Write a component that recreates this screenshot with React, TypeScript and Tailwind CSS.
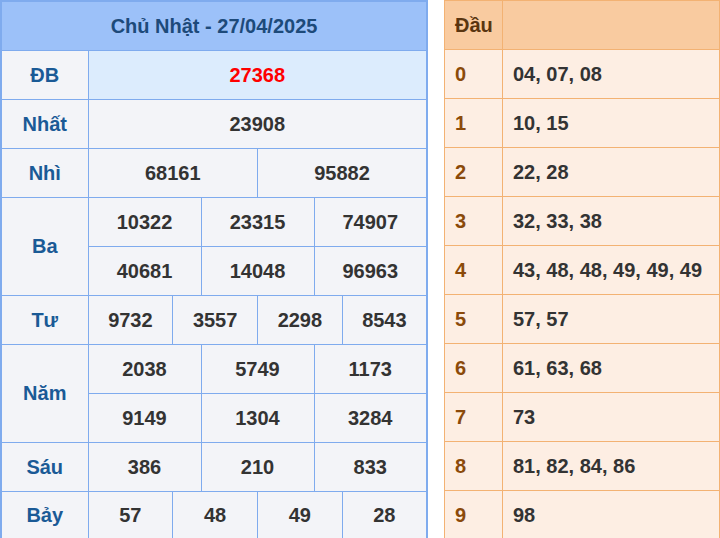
const rows: { label: string; values: string[][]; special?: boolean }[] = [
  { label: 'ĐB', values: [['27368']], special: true },
  { label: 'Nhất', values: [['23908']] },
  { label: 'Nhì', values: [['68161', '95882']] },
  { label: 'Ba', values: [['10322', '23315', '74907'], ['40681', '14048', '96963']] },
  { label: 'Tư', values: [['9732', '3557', '2298', '8543']] },
  { label: 'Năm', values: [['2038', '5749', '1173'], ['9149', '1304', '3284']] },
  { label: 'Sáu', values: [['386', '210', '833']] },
  { label: 'Bảy', values: [['57', '48', '49', '28']] },
];

const heads = [
  '04, 07, 08', '10, 15', '22, 28', '32, 33, 38', '43, 48, 48, 49, 49, 49',
  '57, 57', '61, 63, 68', '73', '81, 82, 84, 86', '98',
];

const font = { fontFamily: '"Liberation Sans", Arial, sans-serif' };

export default function App() {
  return (
    <div className="flex gap-[16px] w-[720px] h-[538px] overflow-hidden bg-white" style={font}>
      <table className="w-[428px] shrink-0 table-fixed border-collapse border-2 border-[#7fabee] text-[20px] font-bold">
        <colgroup>
          <col className="w-[87px]" />
          {Array.from({ length: 12 }).map((_, i) => <col key={i} />)}
        </colgroup>
        <tbody>
          <tr className="h-[49px] bg-[#9cc1f9]">
            <td colSpan={13} className="text-center text-[#1d4a7a] border border-[#7fabee]">Chủ Nhật - 27/04/2025</td>
          </tr>
          {rows.map((r) =>
            r.values.map((line, li) => (
              <tr key={r.label + li} className={`h-[49px] ${r.special ? 'bg-[#dcecfd]' : 'bg-[#f3f4f8]'}`}>
                {li === 0 && (
                  <td rowSpan={r.values.length} className="text-center text-[#1a5a96] border border-[#7fabee] bg-[#f3f4f8]">{r.label}</td>
                )}
                {line.map((v, i) => (
                  <td key={i} colSpan={12 / line.length} className={`text-center border border-[#7fabee] ${r.special ? 'text-[#ff0000]' : 'text-[#333333]'}`}>{v}</td>
                ))}
              </tr>
            ))
          )}
        </tbody>
      </table>
      <table className="flex-1 table-fixed border-collapse text-[20px] font-bold">
        <colgroup>
          <col className="w-[58px]" />
          <col />
        </colgroup>
        <tbody>
          <tr className="h-[49px] bg-[#f9cba0]">
            <td className="pl-[10px] text-[#5a3510] border border-[#f3b273]">Đầu</td>
            <td className="border border-[#f3b273]"></td>
          </tr>
          {heads.map((h, i) => (
            <tr key={i} className="h-[49px] bg-[#fdeee3]">
              <td className="pl-[10px] text-[#8b4a0a] border border-[#f3b273]">{i}</td>
              <td className="pl-[10px] text-[#333333] border border-[#f3b273] whitespace-nowrap">{h}</td>
            </tr>
          ))}
        </tbody>
      </table>
    </div>
  );
}
